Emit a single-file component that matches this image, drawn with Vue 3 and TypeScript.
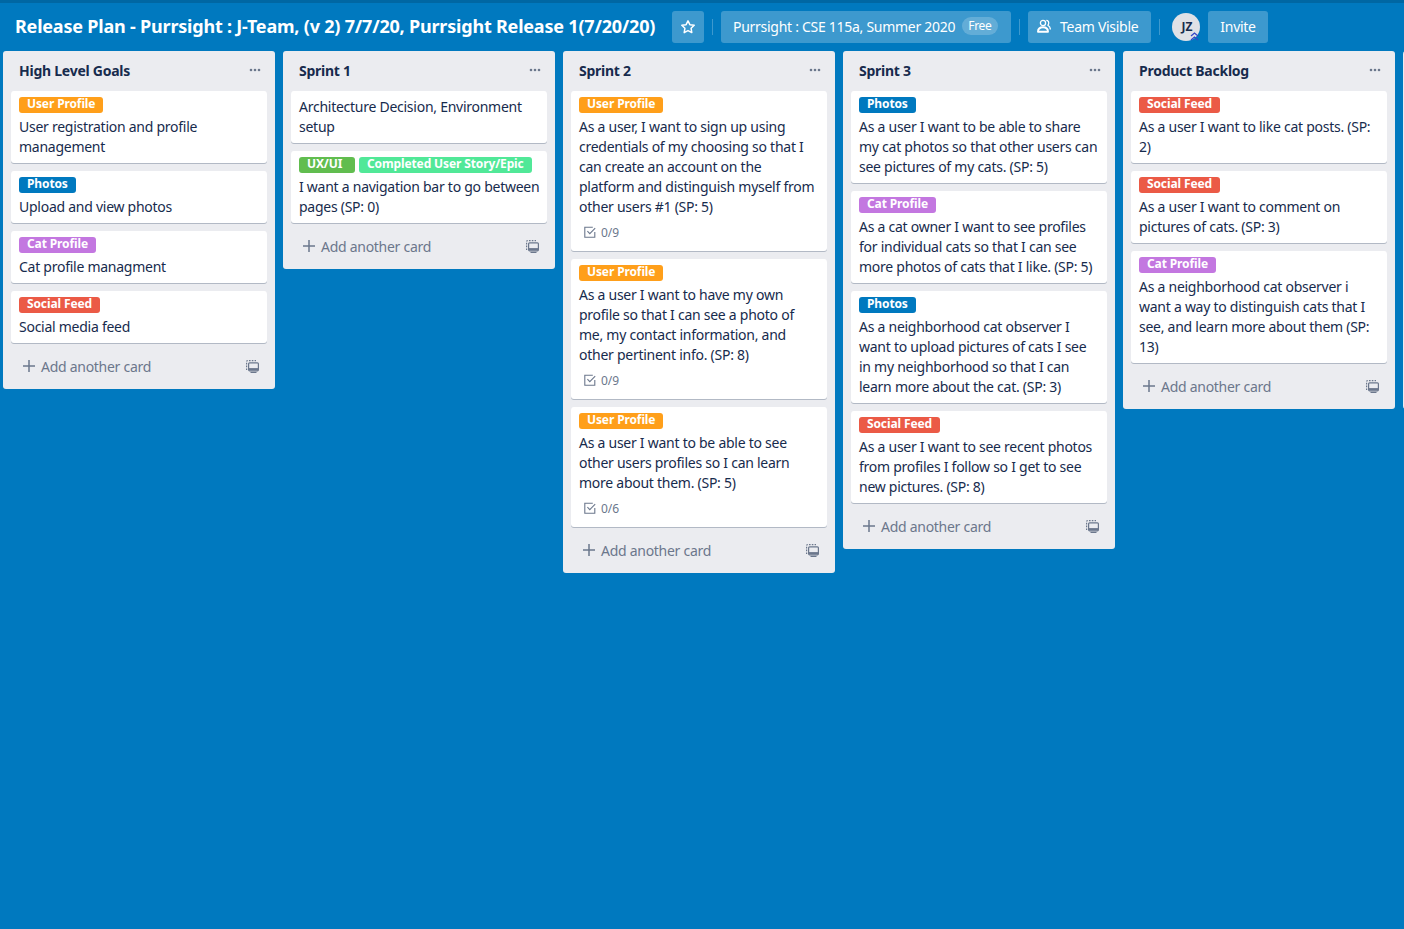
<script setup lang="ts">
type LabelColor = 'orange' | 'blue' | 'purple' | 'red' | 'green' | 'lime'

interface Label {
  name: string
  color: LabelColor
}

interface Card {
  labels?: Label[]
  text: string
  checklist?: string
}

interface List {
  title: string
  cards: Card[]
}

const userProfile: Label = { name: 'User Profile', color: 'orange' }
const photos: Label = { name: 'Photos', color: 'blue' }
const catProfile: Label = { name: 'Cat Profile', color: 'purple' }
const socialFeed: Label = { name: 'Social Feed', color: 'red' }

const lists: List[] = [
  {
    title: 'High Level Goals',
    cards: [
      { labels: [userProfile], text: 'User registration and profile\nmanagement' },
      { labels: [photos], text: 'Upload and view photos' },
      { labels: [catProfile], text: 'Cat profile managment' },
      { labels: [socialFeed], text: 'Social media feed' },
    ],
  },
  {
    title: 'Sprint 1',
    cards: [
      { text: 'Architecture Decision, Environment\nsetup' },
      {
        labels: [
          { name: 'UX/UI', color: 'green' },
          { name: 'Completed User Story/Epic', color: 'lime' },
        ],
        text: 'I want a navigation bar to go between\npages (SP: 0)',
      },
    ],
  },
  {
    title: 'Sprint 2',
    cards: [
      {
        labels: [userProfile],
        text: 'As a user, I want to sign up using\ncredentials of my choosing so that I\ncan create an account on the\nplatform and distinguish myself from\nother users #1 (SP: 5)',
        checklist: '0/9',
      },
      {
        labels: [userProfile],
        text: 'As a user I want to have my own\nprofile so that I can see a photo of\nme, my contact information, and\nother pertinent info. (SP: 8)',
        checklist: '0/9',
      },
      {
        labels: [userProfile],
        text: 'As a user I want to be able to see\nother users profiles so I can learn\nmore about them. (SP: 5)',
        checklist: '0/6',
      },
    ],
  },
  {
    title: 'Sprint 3',
    cards: [
      {
        labels: [photos],
        text: 'As a user I want to be able to share\nmy cat photos so that other users can\nsee pictures of my cats. (SP: 5)',
      },
      {
        labels: [catProfile],
        text: 'As a cat owner I want to see profiles\nfor individual cats so that I can see\nmore photos of cats that I like. (SP: 5)',
      },
      {
        labels: [photos],
        text: 'As a neighborhood cat observer I\nwant to upload pictures of cats I see\nin my neighborhood so that I can\nlearn more about the cat. (SP: 3)',
      },
      {
        labels: [socialFeed],
        text: 'As a user I want to see recent photos\nfrom profiles I follow so I get to see\nnew pictures. (SP: 8)',
      },
    ],
  },
  {
    title: 'Product Backlog',
    cards: [
      { labels: [socialFeed], text: 'As a user I want to like cat posts. (SP:\n2)' },
      { labels: [socialFeed], text: 'As a user I want to comment on\npictures of cats. (SP: 3)' },
      {
        labels: [catProfile],
        text: 'As a neighborhood cat observer i\nwant a way to distinguish cats that I\nsee, and learn more about them (SP:\n13)',
      },
    ],
  },
]
</script>

<template>
  <div class="board">
    <header class="board-header">
      <h1 class="board-title">Release Plan - Purrsight : J-Team, (v 2) 7/7/20, Purrsight Release 1(7/20/20)</h1>
      <button class="hdr-btn star-btn" aria-label="Star">
        <svg width="16" height="16" viewBox="0 0 16 16" fill="none" stroke="#fff" stroke-width="1.5" stroke-linejoin="round">
          <path d="M8 1.8l1.9 3.9 4.300.6-3.100 3 .7 4.300L8 11.600l-3.800 2 .7-4.300-3.100-3 4.300-.6z" />
        </svg>
      </button>
      <span class="sep"></span>
      <button class="hdr-btn team-btn">
        Purrsight : CSE 115a, Summer 2020
        <span class="free">Free</span>
      </button>
      <span class="sep"></span>
      <button class="hdr-btn visible-btn">
        <svg width="14" height="14" viewBox="0 0 14 14" fill="none" stroke="#fff" stroke-width="1.300" stroke-linejoin="round">
          <circle cx="6" cy="4" r="2.600" />
          <path d="M1 12.800c0-3 2-4.600 5-4.600s5 1.600 5 4.600z" stroke-width="1.900" />
          <path d="M9.300 1.400c1.800 0 2.700 1.500 2.300 3.400-.1.600-.4 1-.7 1.400 1.600.9 2.500 2.400 2.500 4.400" />
        </svg>
        Team Visible
      </button>
      <span class="sep"></span>
      <div class="avatar">
        JZ
        <svg class="admin" width="9" height="9" viewBox="0 0 9 9" fill="none" stroke="#3546c8" stroke-width="1.300">
          <path d="M1 4l3.500-3 3.500 3M1 8l3.500-3 3.500 3" />
        </svg>
      </div>
      <button class="hdr-btn invite-btn">Invite</button>
    </header>

    <main class="lists">
      <section v-for="list in lists" :key="list.title" class="list">
        <div class="list-header">
          <h2>{{ list.title }}</h2>
          <svg width="12" height="4" viewBox="0 0 12 4" fill="#6b778c">
            <circle cx="2" cy="2" r="1.300" />
            <circle cx="6" cy="2" r="1.300" />
            <circle cx="10" cy="2" r="1.300" />
          </svg>
        </div>

        <div class="cards">
          <article v-for="card in list.cards" :key="card.text" class="card">
            <div v-if="card.labels" class="labels">
              <span v-for="label in card.labels" :key="label.name" class="label" :class="label.color">{{ label.name }}</span>
            </div>
            <p class="card-text">{{ card.text }}</p>
            <div v-if="card.checklist" class="badges">
              <svg width="12" height="12" viewBox="0 0 12 12" fill="none" stroke="#6b778c" stroke-width="1.100">
                <path d="M10.800 6v5.200H.8V1.200h8" />
                <path d="M3.400 5.200l2.400 2.400 5.400-5.400" />
              </svg>
              <span>{{ card.checklist }}</span>
            </div>
          </article>
        </div>

        <div class="list-footer">
          <span class="add">
            <svg width="12" height="12" viewBox="0 0 12 12" stroke="#6b778c" stroke-width="1.500">
              <path d="M6 0v12M0 6h12" />
            </svg>
            Add another card
          </span>
          <svg width="13" height="13" viewBox="0 0 13 13" fill="none" stroke="#6b778c" stroke-width="1.200">
            <path d="M.6 10V1.600q0-1 1-1H10" stroke-dasharray="1.600 1.200" />
            <rect x="2.600" y="2.800" width="9.800" height="8" rx="1" />
            <path d="M3 9.200h9" stroke-width="2.200" />
            <path d="M4.500 12.400h6" />
          </svg>
        </div>
      </section>
      <section class="list next-list"></section>
    </main>
  </div>
</template>

<style>
html,
body {
  margin: 0;
  background: #0079bf;
  overflow: hidden;
}
</style>

<style scoped>
.board {
  min-height: 929px;
  overflow: hidden;
  background: #0079bf;
  border-top: 3px solid #0067a3;
  box-sizing: border-box;
  font-family: 'Noto Sans', 'Open Sans', sans-serif;
  color: #172b4d;
}

.board-header {
  display: flex;
  align-items: center;
  height: 48px;
  padding-left: 15px;
  white-space: nowrap;
}

.board-title {
  width: 657px;
  flex: none;
  margin: 0 0 2px;
  font-size: 18px;
  font-weight: 700;
  letter-spacing: -0.2px;
  color: #fff;
}

.hdr-btn {
  display: flex;
  align-items: center;
  justify-content: center;
  flex: none;
  box-sizing: border-box;
  height: 32px;
  padding: 0 0 2px;
  border: none;
  border-radius: 3px;
  background: rgba(255, 255, 255, 0.24);
  color: #fff;
  font-family: inherit;
  font-size: 14px;
  letter-spacing: -0.28px;
}

.star-btn {
  width: 32px;
  padding: 0;
}

.team-btn {
  justify-content: flex-start;
  width: 290px;
  padding-left: 12px;
  gap: 7px;
}

.visible-btn {
  justify-content: flex-start;
  width: 123px;
  padding-left: 9px;
  gap: 9px;
}

.invite-btn {
  width: 60px;
  margin-left: 8px;
}

.free {
  padding: 0 6px;
  border-radius: 10px;
  background: rgba(255, 255, 255, 0.2);
  font-size: 12px;
  line-height: 18px;
}

.sep {
  flex: none;
  width: 1px;
  height: 16px;
  margin: 0 8px;
  background: rgba(255, 255, 255, 0.24);
}

.avatar {
  position: relative;
  display: flex;
  align-items: center;
  justify-content: center;
  flex: none;
  width: 28px;
  height: 28px;
  margin-left: 4px;
  padding: 0 0 2px 2px;
  box-sizing: border-box;
  border-radius: 50%;
  background: #dfe1e6;
  font-size: 12px;
  font-weight: 700;
}

.admin {
  position: absolute;
  right: 1px;
  bottom: 0;
}

.lists {
  display: flex;
  align-items: flex-start;
  gap: 8px;
  padding-left: 3px;
}

.list {
  flex: none;
  width: 272px;
  border-radius: 3px;
  background: #ebecf0;
}

.next-list {
  height: 358px;
}

.list-header {
  display: flex;
  align-items: center;
  justify-content: space-between;
  box-sizing: border-box;
  height: 40px;
  padding: 0 14px 2px 16px;
}

.list-header h2 {
  margin: 0;
  font-size: 14px;
  font-weight: 700;
  letter-spacing: -0.25px;
}

.cards {
  display: flex;
  flex-direction: column;
  gap: 8px;
  padding: 0 8px;
}

.card {
  padding: 6px 8px;
  border-radius: 3px;
  background: #fff;
  box-shadow: 0 1px 0 rgba(9, 30, 66, 0.25);
}

.labels {
  display: flex;
  gap: 4px;
  margin-bottom: 4px;
}

.label {
  box-sizing: border-box;
  min-width: 56px;
  height: 16px;
  padding: 0 8px;
  border-radius: 3px;
  color: #fff;
  font-size: 12px;
  font-weight: 700;
  line-height: 14px;
  letter-spacing: -0.12px;
}

.orange { background: #ff9f1a; }
.blue { background: #0079bf; }
.purple { background: #c377e0; }
.red { background: #eb5a46; }
.green { background: #61bd4f; }
.lime { background: #51e898; }

.card-text {
  margin: 0;
  font-size: 14px;
  line-height: 20px;
  letter-spacing: -0.26px;
  white-space: pre;
}

.badges {
  display: flex;
  align-items: center;
  gap: 5px;
  height: 20px;
  margin: 5px 0 3px 5px;
  color: #6b778c;
  font-size: 12px;
}

.list-footer {
  display: flex;
  align-items: center;
  justify-content: space-between;
  height: 46px;
  padding: 0 16px 0 20px;
  color: #6b778c;
  font-size: 14px;
  letter-spacing: -0.28px;
}

.add {
  display: flex;
  align-items: center;
  gap: 6px;
}
</style>
